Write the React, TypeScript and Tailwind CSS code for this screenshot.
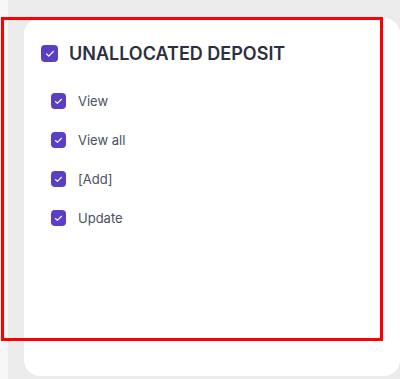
import { Check } from 'lucide-react';

const PERMISSIONS = ['View', 'View all', '[Add]', 'Update'];

function Box({ size }: { size: 'lg' | 'sm' }) {
    return (
        <div
            className={`flex items-center justify-center rounded-[4px] bg-[#5a3ec6] shrink-0 ${
                size === 'lg' ? 'h-[17px] w-[17px]' : 'h-[16px] w-[15px]'
            }`}
        >
            <Check size={size === 'lg' ? 10 : 9} strokeWidth={3} className="text-white" />
        </div>
    );
}

export default function App() {
    return (
        <div
            className="relative flex h-[379px] w-[400px] overflow-hidden bg-[#ebebeb]"
            style={{ fontFamily: 'Inter, "Noto Sans", sans-serif' }}
        >
            {/* left strip */}
            <div className="h-full w-[9px] bg-[#f7f7f7]" />

            {/* Card */}
            <div className="ml-[16px] mt-[18px] h-[358px] w-[376px] shrink-0 rounded-2xl bg-white pl-[17px] pt-[27px]">
                <div className="flex h-[17px] items-center gap-[11px]">
                    <Box size="lg" />
                    <span className="text-[18px] font-semibold leading-none text-[#2b2f3e]">UNALLOCATED DEPOSIT</span>
                </div>

                <div className="mt-[31px] flex flex-col gap-[23px] pl-[10px]">
                    {PERMISSIONS.map(p => (
                        <div key={p} className="flex h-[16px] items-center gap-[12px]">
                            <Box size="sm" />
                            <span className="text-[13px] leading-none text-[#4a5060]">{p}</span>
                        </div>
                    ))}
                </div>
            </div>

            {/* Highlight outline */}
            <div className="pointer-events-none absolute left-[1px] top-[17px] h-[324px] w-[382px] border-[3px] border-[#ff0000]" />
        </div>
    );
}
